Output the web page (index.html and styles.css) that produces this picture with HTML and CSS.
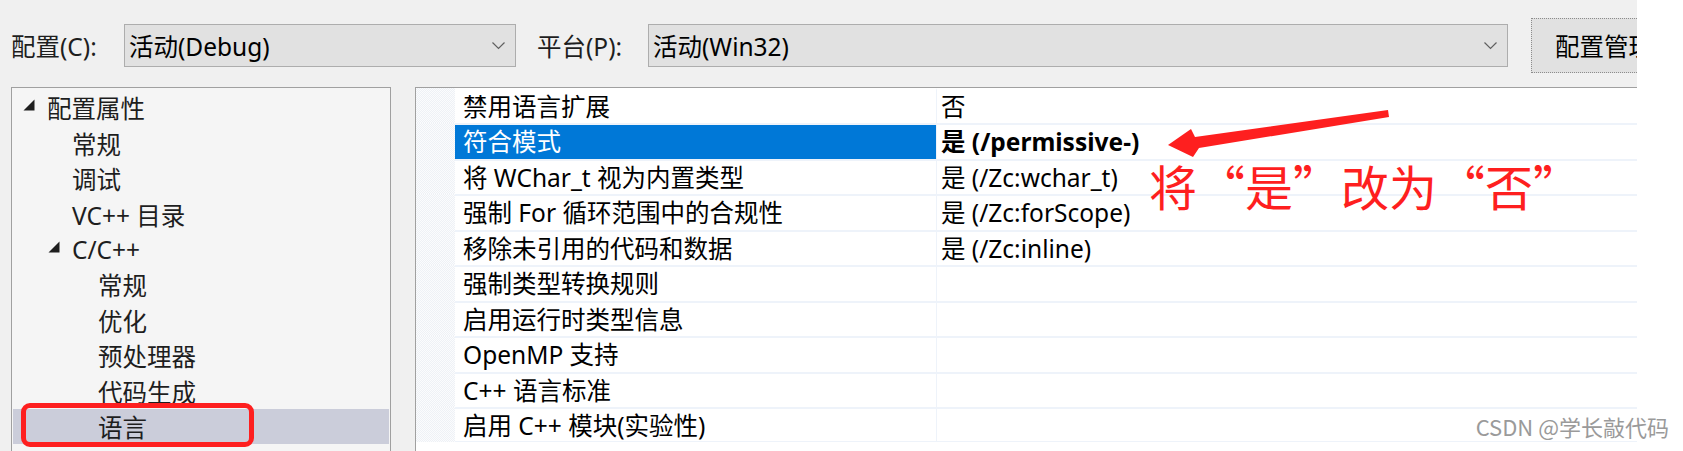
FILE: index.html
```html
<!DOCTYPE html>
<html lang="zh-CN">
<head>
    <meta charset="UTF-8">
    <meta name="viewport" content="width=device-width, initial-scale=1.0">
    <title>C/C++ 语言 属性页</title>
    <link rel="stylesheet" href="styles.css">
</head>
<body>
    <div class="window">
        <div class="toolbar">
            <span class="toolbar-label">配置(C):</span>
            <div class="combo combo-config">
                <span>活动(Debug)</span>
                <svg class="chevron" width="13" height="8" viewBox="0 0 13 8"><polyline points="0.5,0.5 6.5,6.5 12.5,0.5"/></svg>
            </div>
            <span class="toolbar-label platform">平台(P):</span>
            <div class="combo combo-platform">
                <span>活动(Win32)</span>
                <svg class="chevron" width="13" height="8" viewBox="0 0 13 8"><polyline points="0.5,0.5 6.5,6.5 12.5,0.5"/></svg>
            </div>
            <button class="manage-btn">配置管理器(O)...</button>
        </div>

        <div class="panes">
            <div class="tree">
                <div class="node lvl0"><span class="expander"><svg width="12" height="12" viewBox="0 0 12 12"><polygon points="11.5,0.5 11.5,11.5 0.5,11.5"/></svg></span>配置属性</div>
                <div class="node lvl1"><span class="expander"></span>常规</div>
                <div class="node lvl1"><span class="expander"></span>调试</div>
                <div class="node lvl1"><span class="expander"></span>VC++ 目录</div>
                <div class="node lvl1"><span class="expander"><svg width="12" height="12" viewBox="0 0 12 12"><polygon points="11.5,0.5 11.5,11.5 0.5,11.5"/></svg></span>C/C++</div>
                <div class="node lvl2"><span class="expander"></span>常规</div>
                <div class="node lvl2"><span class="expander"></span>优化</div>
                <div class="node lvl2"><span class="expander"></span>预处理器</div>
                <div class="node lvl2"><span class="expander"></span>代码生成</div>
                <div class="node lvl2 selected"><span class="expander"></span>语言</div>
                <div class="node lvl2"><span class="expander"></span>预编译头</div>
            </div>

            <div class="prop-grid">
                <div class="prop-row first"><div class="gutter"></div><div class="prop-name">禁用语言扩展</div><div class="prop-value">否</div></div>
                <div class="prop-row active"><div class="gutter"></div><div class="prop-name">符合模式</div><div class="prop-value changed">是 (/permissive-)</div></div>
                <div class="prop-row"><div class="gutter"></div><div class="prop-name">将 WChar_t 视为内置类型</div><div class="prop-value">是 (/Zc:wchar_t)</div></div>
                <div class="prop-row"><div class="gutter"></div><div class="prop-name">强制 For 循环范围中的合规性</div><div class="prop-value">是 (/Zc:forScope)</div></div>
                <div class="prop-row"><div class="gutter"></div><div class="prop-name">移除未引用的代码和数据</div><div class="prop-value">是 (/Zc:inline)</div></div>
                <div class="prop-row"><div class="gutter"></div><div class="prop-name">强制类型转换规则</div><div class="prop-value"></div></div>
                <div class="prop-row"><div class="gutter"></div><div class="prop-name">启用运行时类型信息</div><div class="prop-value"></div></div>
                <div class="prop-row"><div class="gutter"></div><div class="prop-name">OpenMP 支持</div><div class="prop-value"></div></div>
                <div class="prop-row"><div class="gutter"></div><div class="prop-name">C++ 语言标准</div><div class="prop-value"></div></div>
                <div class="prop-row last"><div class="gutter"></div><div class="prop-name">启用 C++ 模块(实验性)</div><div class="prop-value"></div></div>
            </div>
        </div>
    </div>

    <!-- annotations drawn on top of the screenshot -->
    <div class="mark-box"></div>
    <svg class="mark-arrow" width="240" height="70" viewBox="0 0 240 70">
        <polygon points="8,45 31,29 35,37 228,10 229,17 39,48 33,57"/>
    </svg>
    <div class="mark-text">将“是”改为“否”</div>
    <div class="watermark">CSDN @学长敲代码</div>
</body>
</html>
```

FILE: styles.css
```css
body {
    margin: 0;
    background: #fff;
    font-family: "Noto Sans", "Noto Sans CJK SC", sans-serif;
    font-size: 24.5px;
    color: #1e1e1e;
}
.window {
    width: 1637px;
    height: 451px;
    background: #f0f0f0;
    overflow: hidden;
}
.toolbar {
    display: flex;
    align-items: center;
    height: 87px;
    padding: 4px 0 0 11px;
    box-sizing: border-box;
}
.toolbar > * {
    flex-shrink: 0;
}
.toolbar-label {
    width: 113px;
}
.toolbar-label.platform {
    width: 111px;
    margin-left: 21px;
}
.combo {
    height: 43px;
    box-sizing: border-box;
    border: 1px solid #adadad;
    background: #e1e1e1;
    display: flex;
    align-items: center;
    justify-content: space-between;
    padding: 0 10px 0 4px;
    color: #000;
}
.combo-config {
    width: 392px;
}
.combo-platform {
    width: 860px;
}
.chevron polyline {
    fill: none;
    stroke: #606060;
    stroke-width: 1.2;
}
.manage-btn {
    margin-left: 23px;
    width: 240px;
    height: 55px;
    border: 1px dotted #8c8c8c;
    background: #e1e1e1;
    font: inherit;
    color: #000;
    text-align: left;
    padding: 0 0 0 23px;
}
.panes {
    display: flex;
    gap: 24px;
    padding-left: 11px;
    height: 364px;
}
.tree {
    flex: 0 0 380px;
    box-sizing: border-box;
    border: 1px solid #a0a0a0;
    border-bottom: none;
    background: #f5f5f5;
    padding-top: 2px;
    overflow: hidden;
}
.node {
    display: flex;
    align-items: center;
    height: 35.44px;
    margin: 0 1px;
    white-space: nowrap;
}
.node.lvl0 { padding-left: 10px; }
.node.lvl1 { padding-left: 35px; }
.node.lvl2 { padding-left: 61px; }
.node.selected {
    background: #cbcdda;
}
.expander {
    width: 24px;
    flex-shrink: 0;
    display: flex;
    align-items: center;
    margin-top: -5px;
}
.expander polygon {
    fill: #1e1e1e;
}
.prop-grid {
    flex: 0 0 1300px;
    border-left: 1px solid #a0a0a0;
    border-top: 1px solid #a0a0a0;
    background: #fff;
}
.prop-row {
    display: flex;
    height: 35.44px;
}
.gutter {
    width: 39px;
    flex-shrink: 0;
    background: repeating-conic-gradient(#eef1f6 0 25%, #fbfcfd 0 50%) 0 0 / 2px 2px;
}
.prop-name, .prop-value {
    box-sizing: border-box;
    border-top: 2px solid #eef3fa;
    line-height: 33.44px;
    white-space: nowrap;
    color: #000;
}
.prop-row.first .prop-name, .prop-row.first .prop-value {
    border-top-color: #fff;
}
.prop-row.last .prop-name, .prop-row.last .prop-value {
    border-bottom: 1px solid #eef3fa;
}
.prop-name {
    width: 482px;
    flex-shrink: 0;
    padding-left: 8px;
    border-right: 1px solid #eef3fa;
}
.prop-value {
    flex: 1;
    padding-left: 4px;
}
.prop-row.active .prop-name {
    background: #0078d7;
    color: #fff;
}
.prop-value.changed {
    font-weight: bold;
}
.mark-box {
    position: absolute;
    left: 21px;
    top: 403px;
    width: 233px;
    height: 44px;
    box-sizing: border-box;
    border: 5px solid #fe1f1f;
    border-radius: 9px;
}
.mark-arrow {
    position: absolute;
    left: 1160px;
    top: 100px;
}
.mark-arrow polygon {
    fill: #fe1f1f;
}
.mark-text {
    position: absolute;
    left: 1149px;
    top: 161px;
    font-family: "Noto Sans CJK SC", sans-serif;
    font-size: 48px;
    line-height: 48px;
    color: #fe1f1f;
    white-space: nowrap;
}
.watermark {
    position: absolute;
    right: 14px;
    bottom: 9px;
    font-family: "Noto Sans CJK SC", sans-serif;
    font-size: 22px;
    color: #9a9a9a;
    white-space: nowrap;
}
```
